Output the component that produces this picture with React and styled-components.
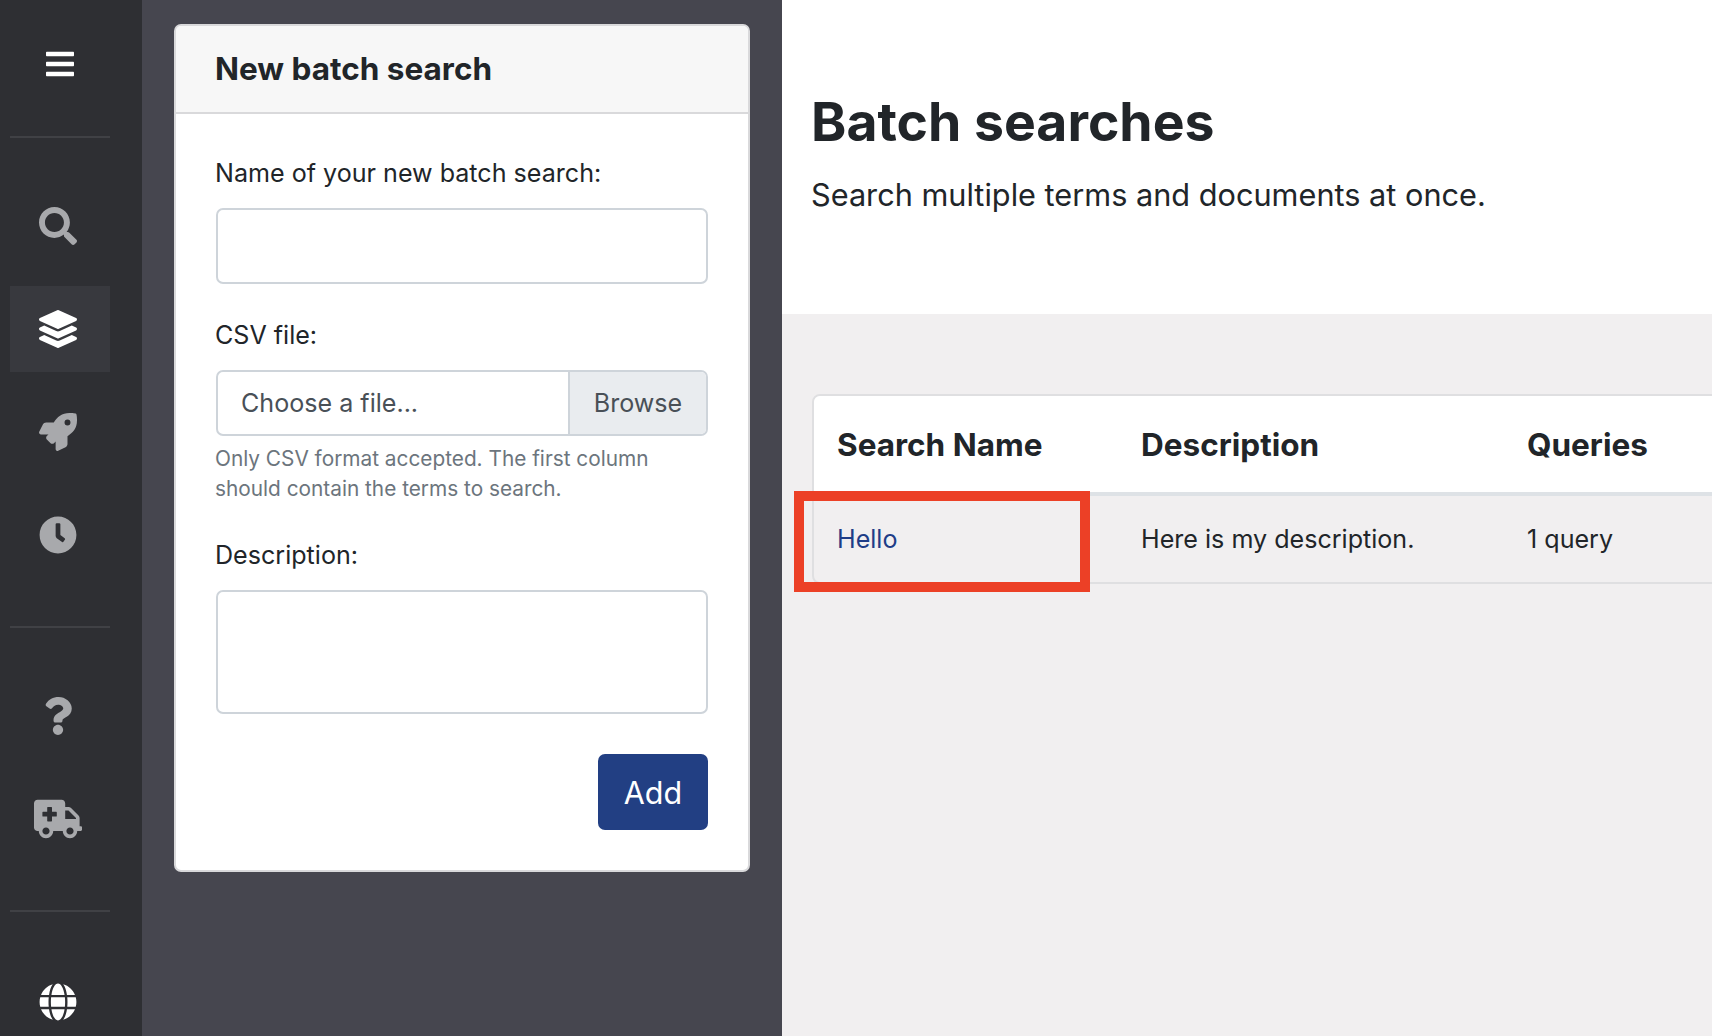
import React from 'react';
import styled, { createGlobalStyle } from 'styled-components';
import { FaBars, FaSearch, FaLayerGroup, FaRocket, FaClock, FaQuestion, FaAmbulance, FaGlobe } from 'react-icons/fa';

const GlobalStyle = createGlobalStyle`
  html, body {
    margin: 0;
    height: 100%;
    overflow: hidden;
    background: #f1eff0;
    color: #212529;
    font-family: Inter, "Liberation Sans", sans-serif;
  }
  * { box-sizing: border-box; }
`;

const Page = styled.div`
  display: flex;
  width: 1712px;
  height: 1036px;
  overflow: hidden;
`;

// Sidebar
const Sidebar = styled.nav`
  flex: 0 0 142px;
  padding: 0 32px 0 10px;
  background: #2e2f33;
  overflow: hidden;
`;

const Toggle = styled.div`
  display: flex;
  align-items: center;
  justify-content: center;
  height: 128px;
  color: #fff;
  font-size: 32px;
`;

const Divider = styled.hr`
  height: 2px;
  margin: ${(p) => p.$top || 0}px 0 0;
  border: 0;
  background: #404145;
`;

const NavGroup = styled.div`
  display: flex;
  flex-direction: column;
  gap: 17px;
  padding: ${(p) => p.$top || 45}px 0 ${(p) => p.$bottom || 48}px;
`;

const NavItem = styled.a`
  display: flex;
  flex: 0 0 86px;
  align-items: center;
  justify-content: center;
  padding-right: 4px;
  color: ${(p) => (p.$light ? '#fff' : '#a8a9ac')};
  background: ${(p) => (p.$active ? '#38393e' : 'transparent')};
  font-size: ${(p) => p.$size || 38}px;
`;

// Left form panel
const Panel = styled.aside`
  flex: 0 0 640px;
  padding: 24px 32px 0;
  background: #46464f;
`;

const Card = styled.section`
  height: 848px;
  background: #fff;
  border: 2px solid #d9d9db;
  border-radius: 7px;
`;

const CardHeader = styled.h2`
  display: flex;
  align-items: center;
  height: 88px;
  margin: 0;
  padding: 0 39px 2px;
  background: #f7f7f7;
  border-bottom: 2px solid #d9d9db;
  border-radius: 5px 5px 0 0;
  font-size: 31.5px;
  font-weight: 700;
`;

const CardBody = styled.form`
  padding: 41px 40px 0;
`;

const Field = styled.div`
  margin-bottom: ${(p) => p.$gap ?? 33}px;
`;

const Label = styled.label`
  display: block;
  margin: 0 0 17px -1px;
  font-size: 25.1px;
  line-height: 36px;
`;

const TextInput = styled.input`
  display: block;
  width: 100%;
  height: 76px;
  border: 2px solid #ced4da;
  border-radius: 7px;
  background: #fff;
  outline: none;
`;

const TextArea = styled.textarea`
  display: block;
  width: 100%;
  height: 124px;
  border: 2px solid #ced4da;
  border-radius: 7px;
  background: #fff;
  resize: none;
  outline: none;
`;

const FileInput = styled.div`
  display: flex;
  height: 66px;
  border: 2px solid #ced4da;
  border-radius: 7px;
  overflow: hidden;
  font-size: 25.1px;
  color: #495057;
`;

const FileName = styled.span`
  display: flex;
  flex: 1;
  align-items: center;
  padding-left: 23px;
`;

const BrowseButton = styled.span`
  display: flex;
  align-items: center;
  justify-content: center;
  width: 138px;
  background: #e9ecef;
  border-left: 2px solid #ced4da;
`;

const HelpText = styled.small`
  display: block;
  margin: 8px 0 0 -1px;
  font-size: 20.8px;
  line-height: 30px;
  color: #6c757d;
`;

const Actions = styled.div`
  display: flex;
  justify-content: flex-end;
  margin-top: 40px;
`;

const SubmitButton = styled.button`
  width: 110px;
  height: 76px;
  border: 0;
  border-radius: 7px;
  background: #223f83;
  color: #fff;
  font: inherit;
  font-size: 30.5px;
`;

// Right content
const Main = styled.main`
  flex: 1;
  min-width: 0;
  background: #f1eff0;
  overflow: hidden;
`;

const Hero = styled.header`
  height: 314px;
  padding: 86px 30px 0 29px;
  background: #fff;
`;

const Title = styled.h1`
  margin: 0;
  font-size: 53.5px;
  line-height: 72px;
  font-weight: 700;
`;

const Subtitle = styled.p`
  margin: 14px 0 0;
  font-size: 30.7px;
  line-height: 45px;
`;

const Content = styled.div`
  padding: 80px 0 0 30px;
`;

const TableBox = styled.div`
  position: relative;
  width: 1100px;
`;

const Table = styled.table`
  width: 100%;
  border: 2px solid #dfdfe1;
  border-radius: 8px;
  border-spacing: 0;
  table-layout: fixed;
`;

const HeadCell = styled.th`
  width: ${(p) => p.$width}px;
  height: 100px;
  padding: 0 0 0 23px;
  background: #fff;
  border-bottom: 4px solid #dee2e6;
  text-align: left;
  font-size: 31.5px;
  font-weight: 700;

  &:first-child { border-top-left-radius: 6px; }
`;

const Cell = styled.td`
  height: 86px;
  padding: 0 0 0 23px;
  font-size: 25.1px;
`;

const NameLink = styled.a`
  color: #1f3d87;
`;

// annotation drawn over the first cell
const Highlight = styled.div`
  position: absolute;
  top: 97px;
  left: -18px;
  width: 296px;
  height: 101px;
  border: 10px solid #ec4026;
  pointer-events: none;
`;

const App = () => {
  return (
    <Page>
      <GlobalStyle />

      <Sidebar>
        <Toggle><FaBars /></Toggle>
        <Divider $top={8} />
        <NavGroup>
          <NavItem><FaSearch /></NavItem>
          <NavItem $active $light><FaLayerGroup /></NavItem>
          <NavItem><FaRocket /></NavItem>
          <NavItem><FaClock /></NavItem>
        </NavGroup>
        <Divider />
        <NavGroup $bottom={48}>
          <NavItem><FaQuestion /></NavItem>
          <NavItem $size={48}><FaAmbulance /></NavItem>
        </NavGroup>
        <Divider />
        <NavGroup $top={47}>
          <NavItem $light><FaGlobe /></NavItem>
        </NavGroup>
      </Sidebar>

      <Panel>
        <Card>
          <CardHeader>New batch search</CardHeader>
          <CardBody>
            <Field>
              <Label>Name of your new batch search:</Label>
              <TextInput />
            </Field>
            <Field>
              <Label>CSV file:</Label>
              <FileInput>
                <FileName>Choose a file...</FileName>
                <BrowseButton>Browse</BrowseButton>
              </FileInput>
              <HelpText>Only CSV format accepted. The first column should contain the terms to search.</HelpText>
            </Field>
            <Field $gap={0}>
              <Label>Description:</Label>
              <TextArea />
            </Field>
            <Actions>
              <SubmitButton type="button">Add</SubmitButton>
            </Actions>
          </CardBody>
        </Card>
      </Panel>

      <Main>
        <Hero>
          <Title>Batch searches</Title>
          <Subtitle>Search multiple terms and documents at once.</Subtitle>
        </Hero>
        <Content>
          <TableBox>
            <Table>
              <thead>
                <tr>
                  <HeadCell $width={304}>Search Name</HeadCell>
                  <HeadCell $width={386}>Description</HeadCell>
                  <HeadCell>Queries</HeadCell>
                </tr>
              </thead>
              <tbody>
                <tr>
                  <Cell><NameLink>Hello</NameLink></Cell>
                  <Cell>Here is my description.</Cell>
                  <Cell>1 query</Cell>
                </tr>
              </tbody>
            </Table>
            <Highlight />
          </TableBox>
        </Content>
      </Main>
    </Page>
  );
};

export default App;
